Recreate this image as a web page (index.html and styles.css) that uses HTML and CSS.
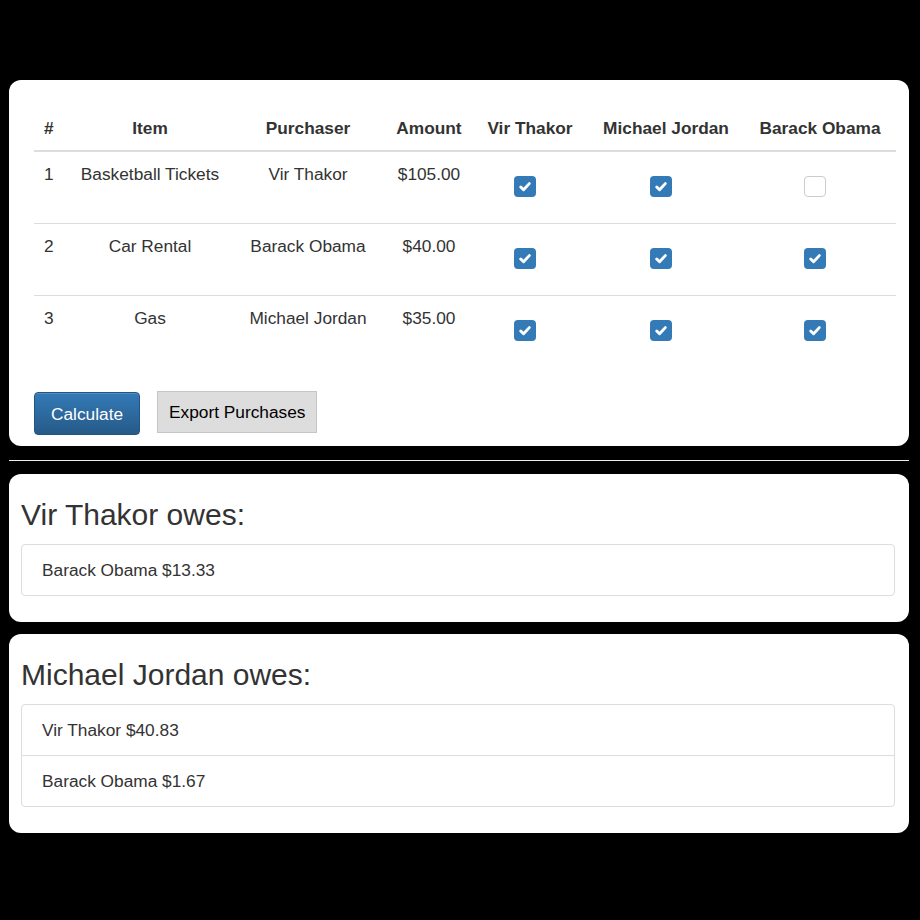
FILE: index.html
```html
<!DOCTYPE html>
<html>
<head>
<meta charset="utf-8">
<link rel="stylesheet" href="styles.css">
</head>
<body>
<div class="page">
  <div class="card card-main">
    <table class="purchases">
      <colgroup>
        <col class="c1"><col class="c2"><col class="c3"><col class="c4"><col class="c5"><col class="c6"><col class="c7">
      </colgroup>
      <thead>
        <tr>
          <th class="num">#</th>
          <th>Item</th>
          <th>Purchaser</th>
          <th>Amount</th>
          <th>Vir Thakor</th>
          <th>Michael Jordan</th>
          <th>Barack Obama</th>
        </tr>
      </thead>
      <tbody>
        <tr>
          <td class="num">1</td>
          <td>Basketball Tickets</td>
          <td>Vir Thakor</td>
          <td>$105.00</td>
          <td class="chk"><span class="box on"><svg viewBox="0 0 22 22"><polyline points="6.5,11.5 9.5,14.5 15.5,8" /></svg></span></td>
          <td class="chk"><span class="box on"><svg viewBox="0 0 22 22"><polyline points="6.5,11.5 9.5,14.5 15.5,8" /></svg></span></td>
          <td class="chk"><span class="box off"></span></td>
        </tr>
        <tr>
          <td class="num">2</td>
          <td>Car Rental</td>
          <td>Barack Obama</td>
          <td>$40.00</td>
          <td class="chk"><span class="box on"><svg viewBox="0 0 22 22"><polyline points="6.5,11.5 9.5,14.5 15.5,8" /></svg></span></td>
          <td class="chk"><span class="box on"><svg viewBox="0 0 22 22"><polyline points="6.5,11.5 9.5,14.5 15.5,8" /></svg></span></td>
          <td class="chk"><span class="box on"><svg viewBox="0 0 22 22"><polyline points="6.5,11.5 9.5,14.5 15.5,8" /></svg></span></td>
        </tr>
        <tr>
          <td class="num">3</td>
          <td>Gas</td>
          <td>Michael Jordan</td>
          <td>$35.00</td>
          <td class="chk"><span class="box on"><svg viewBox="0 0 22 22"><polyline points="6.5,11.5 9.5,14.5 15.5,8" /></svg></span></td>
          <td class="chk"><span class="box on"><svg viewBox="0 0 22 22"><polyline points="6.5,11.5 9.5,14.5 15.5,8" /></svg></span></td>
          <td class="chk"><span class="box on"><svg viewBox="0 0 22 22"><polyline points="6.5,11.5 9.5,14.5 15.5,8" /></svg></span></td>
        </tr>
      </tbody>
    </table>
    <div class="actions">
      <button class="btn-primary">Calculate</button>
      <button class="btn-plain">Export Purchases</button>
    </div>
  </div>

  <hr class="sep">

  <div class="card card-owes">
    <h3 class="owes-title">Vir Thakor owes:</h3>
    <ul class="list-group">
      <li class="list-item">Barack Obama $13.33</li>
    </ul>
  </div>

  <div class="card card-owes">
    <h3 class="owes-title">Michael Jordan owes:</h3>
    <ul class="list-group">
      <li class="list-item">Vir Thakor $40.83</li>
      <li class="list-item">Barack Obama $1.67</li>
    </ul>
  </div>
</div>
</body>
</html>
```

FILE: styles.css
```css
html, body {
  margin: 0;
  padding: 0;
  background: #000;
}

body {
  font-family: "Liberation Sans", Arial, Helvetica, sans-serif;
  font-size: 17.3px;
  color: #333;
}

.page {
  width: 900px;
  margin-left: 9px;
  padding-top: 80px;
}

.card {
  background: #fff;
  border-radius: 12px;
}

.card-main {
  padding: 26px 13px 11px 25px;
}

.purchases {
  width: 862px;
  border-collapse: collapse;
  table-layout: fixed;
  margin-bottom: 24px;
}

.c1 { width: 36px; }
.c2 { width: 160px; }
.c3 { width: 156px; }
.c4 { width: 86px; }
.c5 { width: 116px; }
.c6 { width: 156px; }
.c7 { width: 152px; }

.purchases th,
.purchases td {
  padding: 10px;
  line-height: 24px;
  text-align: center;
  vertical-align: top;
  white-space: nowrap;
}

.purchases th {
  font-weight: bold;
  border-bottom: 2px solid #ddd;
}

.purchases td {
  border-top: 1px solid #ddd;
  height: 51px;
}

.purchases tbody tr:first-child td {
  border-top: none;
}

.purchases .num {
  text-align: left;
}

.purchases td.chk {
  line-height: 0;
}

.box {
  display: inline-block;
  box-sizing: border-box;
  width: 22px;
  height: 21px;
  border-radius: 4px;
  margin-top: 14px;
  margin-right: 10px;
  vertical-align: top;
}

.box svg {
  width: 22px;
  height: 21px;
  display: block;
}

.box svg polyline {
  fill: none;
  stroke: #fff;
  stroke-width: 3;
  stroke-linecap: round;
  stroke-linejoin: round;
}

.box.on {
  background: #337ab7;
}

.box.off {
  background: #fff;
  border: 1px solid #ccc;
}

.actions {
  display: flex;
  align-items: flex-start;
  gap: 17px;
}

.btn-primary {
  font-family: "Liberation Sans", Arial, sans-serif;
  font-size: 17.3px;
  line-height: 24px;
  color: #fff;
  background: linear-gradient(to bottom, #337ab7 0%, #265a88 100%);
  border: 1px solid #245580;
  border-radius: 4px;
  padding: 9px 16px 8px;
  margin-top: 1px;
  box-shadow: inset 0 1px 0 rgba(255,255,255,0.15);
}

.btn-plain {
  font-family: "Liberation Sans", Arial, sans-serif;
  font-size: 17.3px;
  line-height: 24px;
  color: #000;
  background: #ddd;
  border: 1px solid #c6c6c6;
  border-radius: 0;
  padding: 8px 11px;
}

.sep {
  border: none;
  border-top: 1px solid #eee;
  margin: 14px 0 13px 0;
  height: 0;
}

.card-owes {
  padding: 25px 14px 26px 12px;
  margin-bottom: 12px;
}

.owes-title {
  margin: 0 0 13px 0;
  font-size: 30px;
  font-weight: normal;
  line-height: 32px;
  color: #333;
}

.list-group {
  list-style: none;
  margin: 0;
  padding: 0;
  border: 1px solid #ddd;
  border-radius: 4px;
}

.list-item {
  padding: 13px 20px;
  line-height: 24px;
}

.list-item + .list-item {
  border-top: 1px solid #ddd;
}
```
